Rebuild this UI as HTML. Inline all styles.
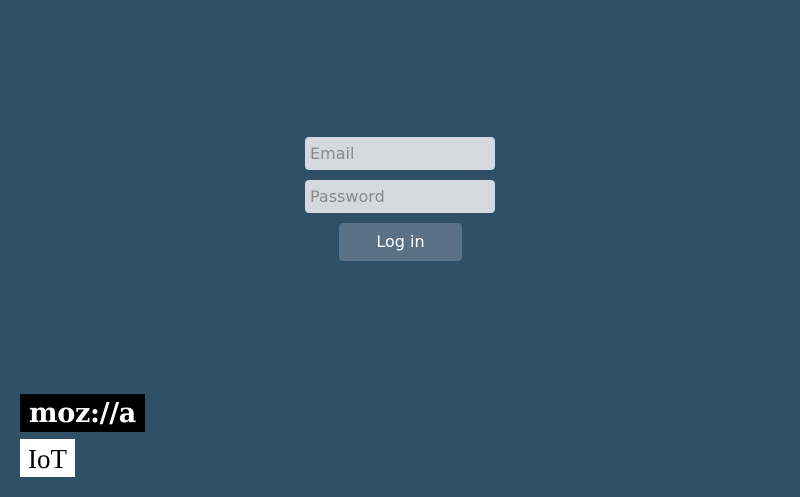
<!DOCTYPE html>
<html><head><style>
body{margin:0;width:800px;height:497px;background:#305067;font-family:"DejaVu Sans","Liberation Sans",sans-serif;position:relative;overflow:hidden}
.in{position:absolute;left:305px;width:190px;height:33px;background:#d3d9df;border-radius:4px;box-sizing:border-box;padding-left:5px;line-height:34px;font-size:16px;color:#8a8a8a}
.btn{position:absolute;left:339px;top:223px;width:123px;height:38px;background:#5a7185;border-radius:4px;color:#fff;font-size:16px;text-align:center;line-height:38px}
.moz{position:absolute;left:20px;top:394px;width:125px;height:38px;background:#000;color:#fff;font-family:"DejaVu Serif","Liberation Serif",serif;font-weight:bold;font-size:27px;line-height:40px;text-align:center;letter-spacing:-0.3px}
.iot{position:absolute;left:20px;top:439px;width:55px;height:38px;background:#fff;color:#000;font-family:"Liberation Serif",serif;font-size:27px;line-height:40px;text-align:center}
</style></head><body>
<div class="in" style="top:137px">Email</div>
<div class="in" style="top:180px">Password</div>
<div class="btn">Log in</div>
<div class="moz">moz://a</div>
<div class="iot">IoT</div>
</body></html>
